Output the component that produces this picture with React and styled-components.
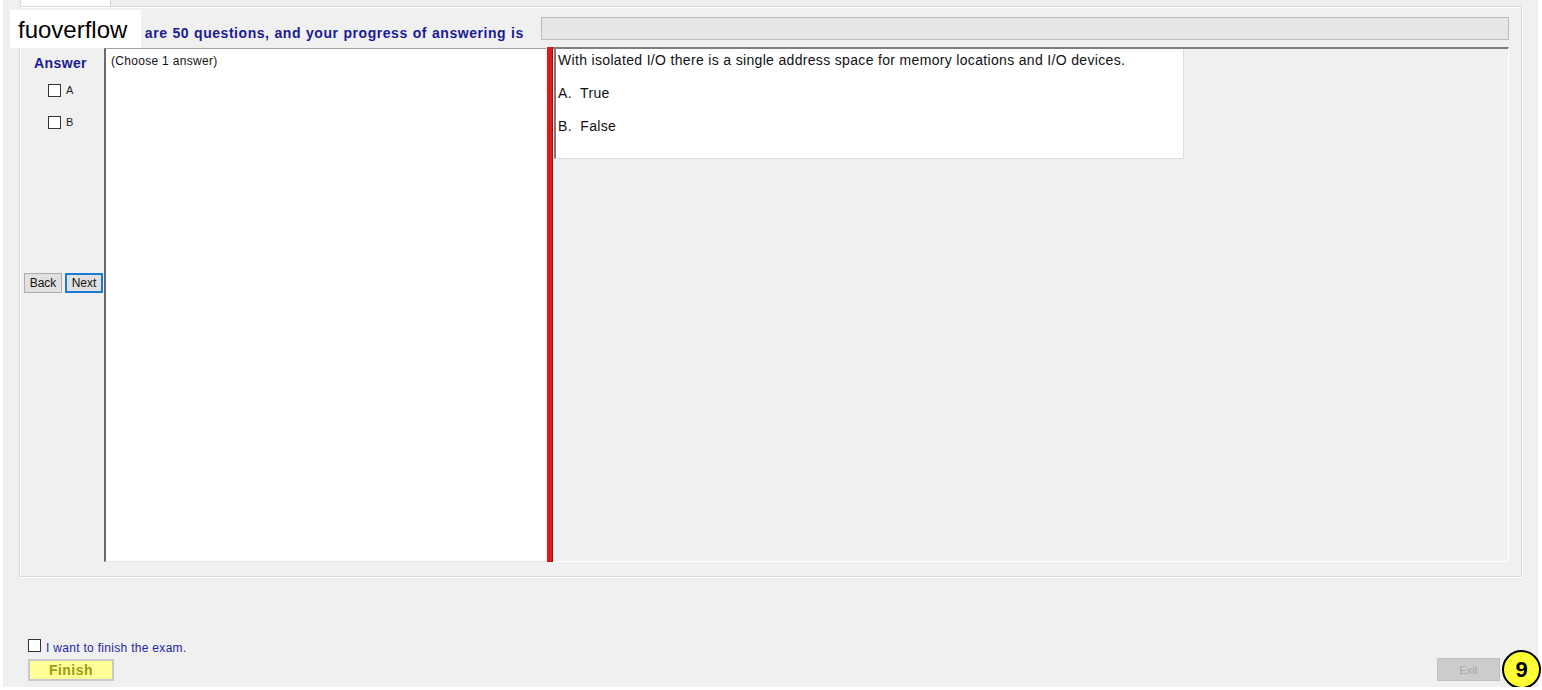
import React from "react";
import styled, { createGlobalStyle } from "styled-components";

const GlobalStyle = createGlobalStyle`
  html, body { margin: 0; padding: 0; background: #ffffff; }
  body { font-family: "Liberation Sans", Arial, sans-serif; }
  * { box-sizing: border-box; }
`;

const Window = styled.div`
  position: relative;
  width: 1535px;
  height: 687px;
  margin-left: 3px;
  background: #f0f0f0;
  display: flex;
  flex-direction: column;
`;

const TabStrip = styled.div`
  height: 6px;
  display: flex;
`;

const Tab = styled.div`
  margin-left: 17px;
  width: 91px;
  height: 6px;
  background: #ffffff;
  border: 1px solid #d6d6d6;
  border-top: none;
  border-bottom: none;
`;

const TabPanel = styled.div`
  margin-left: 16px;
  width: 1503px;
  height: 571px;
  border: 1px solid #dadada;
  box-shadow: inset 1px 1px 0 #ffffff, 1px 1px 0 #ffffff;
  padding: 10px 12px 0 3px;
  display: flex;
  flex-direction: column;
`;

const HeaderRow = styled.div`
  height: 24px;
  display: flex;
  align-items: flex-start;
  padding-left: 76px;
`;

const HeaderLabel = styled.div`
  margin-top: 8px;
  font-size: 14px;
  line-height: 16px;
  letter-spacing: 0.55px;
  word-spacing: 0.5px;
  font-weight: bold;
  color: #1a1a96;
  white-space: nowrap;
`;

const ProgressBar = styled.div`
  margin-left: auto;
  width: 968px;
  height: 23px;
  background: #e6e6e6;
  border: 1px solid #bcbcbc;
`;

const Main = styled.div`
  margin-top: 6px;
  height: 515px;
  display: flex;
`;

const AnswerColumn = styled.div`
  width: 81px;
  display: flex;
  flex-direction: column;
  padding-top: 9px;
`;

const AnswerTitle = styled.div`
  padding-left: 11px;
  font-size: 14px;
  line-height: 15px;
  letter-spacing: 0.4px;
  font-weight: bold;
  color: #1a1a96;
`;

const OptionList = styled.div`
  margin-top: 13px;
  padding-left: 25px;
  display: flex;
  flex-direction: column;
  gap: 19px;
`;

const OptionRow = styled.div`
  display: flex;
  align-items: center;
  height: 13px;
`;

const Box = styled.span`
  display: inline-block;
  width: 13px;
  height: 13px;
  background: #ffffff;
  border: 1px solid #333333;
  flex: none;
`;

const OptionLabel = styled.span`
  margin-left: 5px;
  font-size: 11px;
  color: #222222;
  line-height: 13px;
`;

const NavRow = styled.div`
  margin-top: 144px;
  padding-left: 1px;
  display: flex;
  gap: 3px;
`;

const NavButton = styled.div`
  width: 38px;
  height: 20px;
  background: #e1e1e1;
  border: ${(p) => (p.$focused ? "2px solid #1a7ad4" : "1px solid #adadad")};
  font-size: 12px;
  color: #111111;
  display: flex;
  align-items: center;
  justify-content: center;
`;

const ChoicePanel = styled.div`
  margin-top: 1px;
  width: 442px;
  background: #ffffff;
  border-left: 2px solid #696969;
  border-top: 1px solid #a0a0a0;
  border-bottom: 1px solid #e3e3e3;
  padding: 5px 0 0 5px;
  font-size: 12px;
  line-height: 14px;
  letter-spacing: 0.3px;
  color: #111111;
`;

const Splitter = styled.div`
  margin-left: 1px;
  width: 6px;
  background: #d81b1b;
  border-right: 1px solid #a01010;
`;

const QuestionArea = styled.div`
  flex: 1;
  background: #f0f0f0;
  border-top: 2px solid #7f7f7f;
  border-right: 1px solid #ffffff;
  border-bottom: 1px solid #ffffff;
`;

const QuestionBox = styled.div`
  margin-left: 1px;
  width: 630px;
  height: 110px;
  background: #ffffff;
  border-left: 2px solid #7a7a7a;
  border-right: 1px solid #dcdcdc;
  border-bottom: 1px solid #dcdcdc;
  padding: 3px 0 0 2px;
  font-size: 14px;
  line-height: 16px;
  letter-spacing: 0.33px;
  color: #111111;
`;

const Para = styled.p`
  margin: 0 0 17px;
`;

const Footer = styled.div`
  flex: 1;
  display: flex;
  justify-content: space-between;
  align-items: flex-end;
  padding: 0 38px 6px 25px;
`;

const FinishGroup = styled.div`
  display: flex;
  flex-direction: column;
`;

const FinishCheckRow = styled.div`
  display: flex;
  align-items: center;
  height: 13px;
`;

const FinishLabel = styled.span`
  margin-left: 5px;
  margin-top: 5px;
  font-size: 12px;
  line-height: 13px;
  letter-spacing: 0.3px;
  color: #1f1fa0;
`;

const FinishButton = styled.div`
  margin-top: 7px;
  width: 86px;
  height: 22px;
  background: #ffff99;
  border: 2px solid #c8c8c8;
  font-size: 14px;
  letter-spacing: 0.5px;
  font-weight: bold;
  color: #9a9a14;
  display: flex;
  align-items: center;
  justify-content: center;
`;

const ExitButton = styled.div`
  width: 63px;
  height: 23px;
  background: #cccccc;
  border: 1px solid #bfbfbf;
  font-size: 11px;
  color: #a8a8a8;
  display: flex;
  align-items: center;
  justify-content: center;
`;

const Badge = styled.div`
  position: absolute;
  left: 1499px;
  top: 650px;
  width: 39px;
  height: 39px;
  border-radius: 50%;
  border: 2px solid #000000;
  background: #ffff33;
  font-size: 22px;
  font-weight: bold;
  color: #000000;
  display: flex;
  align-items: center;
  justify-content: center;
`;

const Watermark = styled.div`
  position: absolute;
  left: 7px;
  top: 10px;
  width: 131px;
  height: 38px;
  background: #ffffff;
  padding: 2px 0 0 8px;
  font-size: 24px;
  line-height: 36px;
  color: #000000;
`;

export default function App() {
  return (
    <>
      <GlobalStyle />
      <Window>
        <TabStrip>
          <Tab />
        </TabStrip>
        <TabPanel>
          <HeaderRow>
            <HeaderLabel>There are 50 questions, and your progress of answering is</HeaderLabel>
            <ProgressBar />
          </HeaderRow>
          <Main>
            <AnswerColumn>
              <AnswerTitle>Answer</AnswerTitle>
              <OptionList>
                {["A", "B"].map((l) => (
                  <OptionRow key={l}>
                    <Box />
                    <OptionLabel>{l}</OptionLabel>
                  </OptionRow>
                ))}
              </OptionList>
              <NavRow>
                <NavButton>Back</NavButton>
                <NavButton $focused>Next</NavButton>
              </NavRow>
            </AnswerColumn>
            <ChoicePanel>(Choose 1 answer)</ChoicePanel>
            <Splitter />
            <QuestionArea>
              <QuestionBox>
                <Para>With isolated I/O there is a single address space for memory locations and I/O devices.</Para>
                <Para>A.&nbsp; True</Para>
                <Para>B.&nbsp; False</Para>
              </QuestionBox>
            </QuestionArea>
          </Main>
        </TabPanel>
        <Footer>
          <FinishGroup>
            <FinishCheckRow>
              <Box />
              <FinishLabel>I want to finish the exam.</FinishLabel>
            </FinishCheckRow>
            <FinishButton>Finish</FinishButton>
          </FinishGroup>
          <ExitButton>Exit</ExitButton>
        </Footer>
        <Badge>9</Badge>
        <Watermark>fuoverflow</Watermark>
      </Window>
    </>
  );
}
